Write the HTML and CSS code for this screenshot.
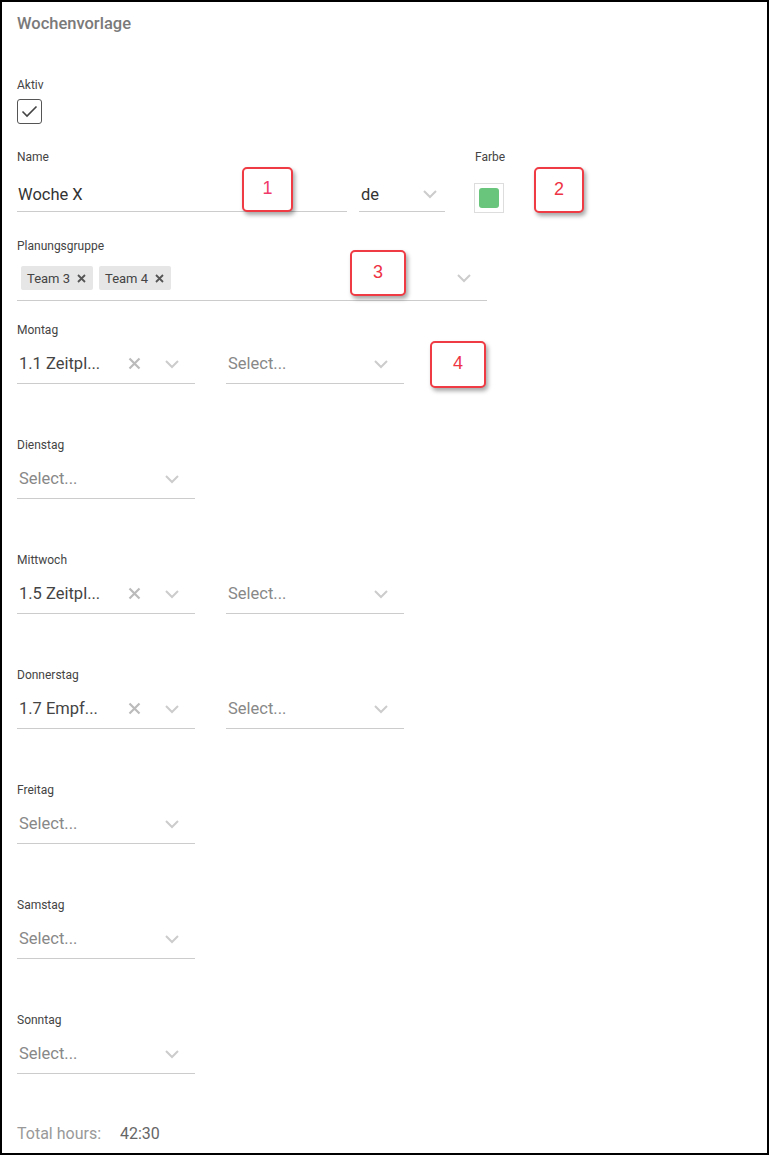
FILE: index.html
```html
<!DOCTYPE html>
<html lang="de">
<head>
<meta charset="UTF-8">
<title>Wochenvorlage</title>
<link rel="stylesheet" href="styles.css">
</head>
<body>
<div class="page">
  <h1 class="title">Wochenvorlage</h1>

  <div class="field aktiv">
    <div class="label">Aktiv</div>
    <div class="checkbox">
      <svg width="17" height="13" viewBox="0 0 17 13"><path d="M1.5 6.5l4.5 4.5 9.5-9.5" fill="none" stroke="#444" stroke-width="1.6"/></svg>
    </div>
  </div>

  <div class="row name-row">
    <div class="field name">
      <div class="label">Name</div>
      <div class="control">Woche X</div>
    </div>
    <div class="field lang">
      <div class="label">&nbsp;</div>
      <div class="control">
        <span class="value">de</span>
        <svg class="chev" width="16" height="10" viewBox="0 0 16 10"><path d="M2 2l6 6 6-6" fill="none" stroke="#ccc" stroke-width="2"/></svg>
      </div>
    </div>
    <div class="field farbe">
      <div class="label">Farbe</div>
      <div class="swatch"><span></span></div>
    </div>
  </div>

  <div class="field gruppe">
    <div class="label">Planungsgruppe</div>
    <div class="control">
      <span class="chip">Team 3 <svg width="9" height="9" viewBox="0 0 9 9"><path d="M1 1l7 7M8 1l-7 7" stroke="#555" stroke-width="1.8"/></svg></span>
      <span class="chip">Team 4 <svg width="9" height="9" viewBox="0 0 9 9"><path d="M1 1l7 7M8 1l-7 7" stroke="#555" stroke-width="1.8"/></svg></span>
      <svg class="chev" width="16" height="10" viewBox="0 0 16 10"><path d="M2 2l6 6 6-6" fill="none" stroke="#ccc" stroke-width="2"/></svg>
    </div>
  </div>

  <div class="day">
    <div class="label">Montag</div>
    <div class="selects">
      <div class="control sel">
        <span class="value">1.1 Zeitpl...</span>
        <svg class="clear" width="13" height="13" viewBox="0 0 13 13"><path d="M1.5 1.5l10 10M11.5 1.5l-10 10" stroke="#bbb" stroke-width="2.2"/></svg>
        <svg class="chev" width="16" height="10" viewBox="0 0 16 10"><path d="M2 2l6 6 6-6" fill="none" stroke="#ccc" stroke-width="2"/></svg>
      </div>
      <div class="control sel">
        <span class="placeholder">Select...</span>
        <svg class="chev" width="16" height="10" viewBox="0 0 16 10"><path d="M2 2l6 6 6-6" fill="none" stroke="#ccc" stroke-width="2"/></svg>
      </div>
    </div>
  </div>

  <div class="day">
    <div class="label">Dienstag</div>
    <div class="selects">
      <div class="control sel">
        <span class="placeholder">Select...</span>
        <svg class="chev" width="16" height="10" viewBox="0 0 16 10"><path d="M2 2l6 6 6-6" fill="none" stroke="#ccc" stroke-width="2"/></svg>
      </div>
    </div>
  </div>

  <div class="day">
    <div class="label">Mittwoch</div>
    <div class="selects">
      <div class="control sel">
        <span class="value">1.5 Zeitpl...</span>
        <svg class="clear" width="13" height="13" viewBox="0 0 13 13"><path d="M1.5 1.5l10 10M11.5 1.5l-10 10" stroke="#bbb" stroke-width="2.2"/></svg>
        <svg class="chev" width="16" height="10" viewBox="0 0 16 10"><path d="M2 2l6 6 6-6" fill="none" stroke="#ccc" stroke-width="2"/></svg>
      </div>
      <div class="control sel">
        <span class="placeholder">Select...</span>
        <svg class="chev" width="16" height="10" viewBox="0 0 16 10"><path d="M2 2l6 6 6-6" fill="none" stroke="#ccc" stroke-width="2"/></svg>
      </div>
    </div>
  </div>

  <div class="day">
    <div class="label">Donnerstag</div>
    <div class="selects">
      <div class="control sel">
        <span class="value">1.7 Empf...</span>
        <svg class="clear" width="13" height="13" viewBox="0 0 13 13"><path d="M1.5 1.5l10 10M11.5 1.5l-10 10" stroke="#bbb" stroke-width="2.2"/></svg>
        <svg class="chev" width="16" height="10" viewBox="0 0 16 10"><path d="M2 2l6 6 6-6" fill="none" stroke="#ccc" stroke-width="2"/></svg>
      </div>
      <div class="control sel">
        <span class="placeholder">Select...</span>
        <svg class="chev" width="16" height="10" viewBox="0 0 16 10"><path d="M2 2l6 6 6-6" fill="none" stroke="#ccc" stroke-width="2"/></svg>
      </div>
    </div>
  </div>

  <div class="day">
    <div class="label">Freitag</div>
    <div class="selects">
      <div class="control sel">
        <span class="placeholder">Select...</span>
        <svg class="chev" width="16" height="10" viewBox="0 0 16 10"><path d="M2 2l6 6 6-6" fill="none" stroke="#ccc" stroke-width="2"/></svg>
      </div>
    </div>
  </div>

  <div class="day">
    <div class="label">Samstag</div>
    <div class="selects">
      <div class="control sel">
        <span class="placeholder">Select...</span>
        <svg class="chev" width="16" height="10" viewBox="0 0 16 10"><path d="M2 2l6 6 6-6" fill="none" stroke="#ccc" stroke-width="2"/></svg>
      </div>
    </div>
  </div>

  <div class="day">
    <div class="label">Sonntag</div>
    <div class="selects">
      <div class="control sel">
        <span class="placeholder">Select...</span>
        <svg class="chev" width="16" height="10" viewBox="0 0 16 10"><path d="M2 2l6 6 6-6" fill="none" stroke="#ccc" stroke-width="2"/></svg>
      </div>
    </div>
  </div>

  <div class="total">
    <span class="total-label">Total hours:</span>
    <span class="total-value">42:30</span>
  </div>

  <!-- annotation callouts -->
  <div class="callout c1">1</div>
  <div class="callout c2">2</div>
  <div class="callout c3">3</div>
  <div class="callout c4">4</div>
</div>
</body>
</html>
```

FILE: styles.css
```css
* {
  box-sizing: border-box;
}

body {
  margin: 0;
  background: #fff;
  font-family: Roboto, "Noto Sans", sans-serif;
  color: #333;
}

.page {
  position: relative;
  width: 769px;
  height: 1155px;
  border: 2px solid #000;
  padding: 11px 15px 0 15px;
}

.title {
  margin: 0;
  font-size: 16.5px;
  line-height: 22px;
  font-weight: 500;
  color: #7a7a7a;
}

.label {
  font-size: 12px;
  line-height: 16px;
  color: #444;
}

.field {
  display: flex;
  flex-direction: column;
}

.aktiv {
  margin-top: 42px;
}

.checkbox {
  margin-top: 6px;
  width: 25px;
  height: 25px;
  border: 1px solid #555;
  border-radius: 3px;
  display: flex;
  align-items: center;
  justify-content: center;
}

.control {
  display: flex;
  align-items: center;
  border-bottom: 1px solid #ccc;
}

.name-row {
  display: flex;
  margin-top: 25px;
}

.name {
  width: 330px;
}

.name .control,
.lang .control {
  height: 47px;
  padding-top: 12px;
  font-size: 16.5px;
  color: #333;
}

.name .control {
  padding-left: 1px;
}

.lang {
  width: 86px;
  margin-left: 12px;
}

.lang .control {
  padding-left: 2px;
  justify-content: space-between;
  padding-right: 7px;
}

.farbe {
  margin-left: 29px;
  padding-left: 1px;
}

.swatch {
  margin-top: 18px;
  margin-left: -1px;
  width: 30px;
  height: 30px;
  border: 1px solid #ddd;
  padding: 4px;
}

.swatch span {
  display: block;
  width: 100%;
  height: 100%;
  background: #68c57b;
  border-radius: 3px;
}

.gruppe {
  margin-top: 25px;
  width: 470px;
}

.gruppe .control {
  height: 47px;
  padding: 2px 15px 0 4px;
  gap: 6px;
}

.chip {
  display: flex;
  align-items: center;
  gap: 7px;
  height: 24px;
  padding: 0 7px 0 6px;
  background: #e6e6e6;
  border-radius: 2px;
  font-size: 13px;
  color: #444;
}

.gruppe .chev {
  margin-left: auto;
}

.day {
  margin-top: 21px;
}

.day + .day {
  margin-top: 53px;
}

.selects {
  display: flex;
  gap: 31px;
}

.sel {
  width: 178px;
  height: 46px;
  padding: 6px 15px 0 2px;
  font-size: 16.5px;
}

.sel .value {
  color: #444;
}

.sel .placeholder {
  color: #888;
}

.sel .clear {
  margin-left: auto;
  margin-right: 23px;
}

.sel .placeholder + .chev {
  margin-left: auto;
}

.total {
  margin-top: 50px;
  display: flex;
  font-size: 16px;
  line-height: 20px;
}

.total-label {
  width: 103px;
  color: #999;
}

.total-value {
  color: #666;
}

.callout {
  position: absolute;
  display: flex;
  align-items: center;
  justify-content: center;
  background: #fff;
  border: 2px solid #ef3b44;
  border-radius: 5px;
  box-shadow: 2px 3px 4px rgba(0, 0, 0, 0.35);
  font-family: "Liberation Sans", Arial, sans-serif;
  font-size: 18px;
  color: #ee3344;
  padding-bottom: 2px;
}

.c1 {
  left: 240px;
  top: 165px;
  width: 51px;
  height: 45px;
  color: #f03a6a;
}

.c2 {
  left: 532px;
  top: 165px;
  width: 50px;
  height: 46px;
}

.c3 {
  left: 348px;
  top: 248px;
  width: 56px;
  height: 46px;
}

.c4 {
  left: 428px;
  top: 339px;
  width: 56px;
  height: 47px;
}
```
